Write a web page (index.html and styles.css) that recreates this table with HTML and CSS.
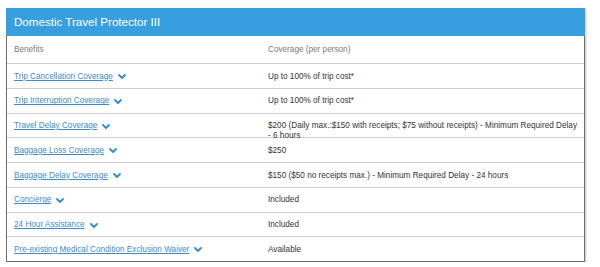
FILE: index.html
```html
<!DOCTYPE html>
<html lang="en">
<head>
<meta charset="utf-8">
<title>Domestic Travel Protector III</title>
<link rel="stylesheet" href="styles.css">
</head>
<body>
<div class="card">
  <div class="card-title">Domestic Travel Protector III</div>
  <div class="table">
    <div class="row head">
      <div class="cell">Benefits</div>
      <div class="cell">Coverage (per person)</div>
    </div>
    <div class="row">
      <div class="cell"><a class="link" href="#">Trip Cancellation Coverage</a><svg class="chev" viewBox="0 0 8 5"><path d="M1 1 L4 4 L7 1"/></svg></div>
      <div class="cell">Up to 100% of trip cost*</div>
    </div>
    <div class="row">
      <div class="cell"><a class="link" href="#">Trip Interruption Coverage</a><svg class="chev" viewBox="0 0 8 5"><path d="M1 1 L4 4 L7 1"/></svg></div>
      <div class="cell">Up to 100% of trip cost*</div>
    </div>
    <div class="row">
      <div class="cell"><a class="link" href="#">Travel Delay Coverage</a><svg class="chev" viewBox="0 0 8 5"><path d="M1 1 L4 4 L7 1"/></svg></div>
      <div class="cell">$200 (Daily max.:$150 with receipts; $75 without receipts) - Minimum Required Delay - 6 hours</div>
    </div>
    <div class="row">
      <div class="cell"><a class="link" href="#">Baggage Loss Coverage</a><svg class="chev" viewBox="0 0 8 5"><path d="M1 1 L4 4 L7 1"/></svg></div>
      <div class="cell">$250</div>
    </div>
    <div class="row">
      <div class="cell"><a class="link" href="#">Baggage Delay Coverage</a><svg class="chev" viewBox="0 0 8 5"><path d="M1 1 L4 4 L7 1"/></svg></div>
      <div class="cell">$150 ($50 no receipts max.) - Minimum Required Delay - 24 hours</div>
    </div>
    <div class="row">
      <div class="cell"><a class="link" href="#">Concierge</a><svg class="chev" viewBox="0 0 8 5"><path d="M1 1 L4 4 L7 1"/></svg></div>
      <div class="cell">Included</div>
    </div>
    <div class="row">
      <div class="cell"><a class="link" href="#">24 Hour Assistance</a><svg class="chev" viewBox="0 0 8 5"><path d="M1 1 L4 4 L7 1"/></svg></div>
      <div class="cell">Included</div>
    </div>
    <div class="row last">
      <div class="cell"><a class="link" href="#">Pre-existing Medical Condition Exclusion Waiver</a><svg class="chev" viewBox="0 0 8 5"><path d="M1 1 L4 4 L7 1"/></svg></div>
      <div class="cell">Available</div>
    </div>
  </div>
</div>
</body>
</html>
```
FILE: styles.css
```css
html, body {
  margin: 0;
  padding: 0;
  background: #ffffff;
}
body {
  padding: 8px 14px 0 6px;
  font-family: "Liberation Sans", Arial, Helvetica, sans-serif;
  color: #333333;
}
.card {
  width: 579px;
  border-left: 1px solid #6f6f6f;
  border-right: 1px solid #6f6f6f;
  border-bottom: 1px solid #6f6f6f;
  box-shadow: 1px 1px 2px rgba(0, 0, 0, 0.25);
  box-sizing: border-box;
}
.card-title {
  height: 28px;
  margin: 0 -1px;
  background: #379ee0;
  color: #ffffff;
  font-size: 11.6px;
  line-height: 28px;
  padding-left: 8px;
  box-sizing: border-box;
}
.table {
  display: flex;
  flex-direction: column;
}
.row {
  display: grid;
  grid-template-columns: 254px 1fr;
  height: 24.75px;
  box-sizing: border-box;
  border-bottom: 1px solid #cfcfcf;
  font-size: 8.2px;
  line-height: 9.5px;
}
.row.head {
  height: 28px;
  color: #7a7a7a;
}
.row.last {
  border-bottom: none;
  height: 24px;
}
.cell {
  padding: 7.5px 3px 0 7px;
  display: flex;
  align-items: flex-start;
}
.row.head .cell {
  padding-top: 9px;
}
.link {
  color: #3d8bc6;
  text-decoration: underline;
}
.chev {
  width: 8px;
  height: 5px;
  margin-left: 5px;
  margin-top: 2.5px;
  flex: none;
}
.chev path {
  fill: none;
  stroke: #2f8ed6;
  stroke-width: 1.8;
  stroke-linecap: round;
  stroke-linejoin: round;
}
```
